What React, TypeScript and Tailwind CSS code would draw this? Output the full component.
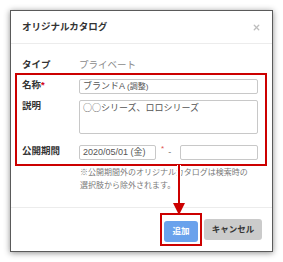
import { X } from "lucide-react";

const font = {
  fontFamily: '"Liberation Sans", "Noto Sans CJK JP", sans-serif',
};

const Label = ({ text, required }: { text: string; required?: boolean }) => (
  <div className="w-[57px] shrink-0 text-[9.5px] leading-[12px] font-bold text-[#333]">
    {text}
    {required && <span className="text-[#d0021b]">*</span>}
  </div>
);

export default function App() {
  return (
    <div
      className="relative w-[283px] h-[262px] bg-white pt-[10px] pl-[10px] overflow-hidden"
      style={font}
    >
      {/* dialog */}
      <div className="w-[263px] h-[242px] bg-white border border-[#5a5a5a] shadow-[0_1px_6px_rgba(0,0,0,0.45)] flex flex-col">
        {/* header */}
        <div className="h-[33px] shrink-0 flex items-center justify-between pl-[11px] pr-[11px] border-b border-[#ececec]">
          <p className="text-[9.5px] font-bold text-[#333]">オリジナルカタログ</p>
          <X size={9} strokeWidth={3.5} className="text-[#bdbdbd]" />
        </div>

        {/* body */}
        <div className="px-[11px] pt-[14px]">
          <div className="flex items-center h-[14px]">
            <Label text="タイプ" />
            <span className="text-[9.5px] text-[#8a8a8a]">プライベート</span>
          </div>

          <div className="mt-[1px] -ml-[7px] -mr-[6px] border-2 border-[#cc0000] pl-[5px] pr-[7px] pt-[4px] pb-[4px] flex flex-col">
            <div className="flex items-start">
              <Label text="名称" required />
              <div className="flex-1 h-[15px] border border-[#c8c8c8] rounded-[2px] px-[3px] flex items-center text-[9px] text-[#555]">
                ブランドA <span className="text-[8px] ml-[2px]">(調整)</span>
              </div>
            </div>

            <div className="flex items-start mt-[6px]">
              <Label text="説明" />
              <div className="flex-1 h-[34px] border border-[#c8c8c8] rounded-[2px] px-[3px] pt-[1px] text-[9px] leading-[12px] text-[#555] font-['Noto_Sans_CJK_JP',sans-serif]">
                ○○シリーズ、ロロシリーズ
              </div>
            </div>

            <div className="flex items-start mt-[11px]">
              <Label text="公開期間" />
              <div className="flex-1 flex items-start">
                <div className="w-[77px] h-[15px] border border-[#c8c8c8] rounded-[2px] px-[3px] flex items-center text-[9px] text-[#555]">
                  2020/05/01 (金)
                </div>
                <span className="ml-[5px] text-[8px] leading-[8px] text-[#e05050]">*</span>
                <span className="ml-[4px] mt-[3px] text-[9px] leading-[9px] text-[#777]">-</span>
                <div className="ml-auto w-[78px] h-[15px] border border-[#c8c8c8] rounded-[2px]" />
              </div>
            </div>
          </div>

          <p className="pl-[58px] pr-[8px] text-[8px] leading-[13px] text-[#7a7a7a]">
            ※公開期間外のオリジナルカタログは検索時の選択肢から除外されます。
          </p>
        </div>

        {/* footer */}
        <div className="mt-auto h-[44px] border-t border-[#ececec] flex items-center justify-end pr-[10px]">
          <div className="border-2 border-[#cc0000] p-[2px]">
            <button className="h-[21px] w-[34px] rounded-[3px] bg-[#6aa2ec] text-white text-[8.5px] font-bold">
              追加
            </button>
          </div>
          <button className="ml-[2px] h-[21px] w-[58px] rounded-[3px] bg-[#cbcbcb] text-[#333] text-[8.5px] font-bold">
            キャンセル
          </button>
        </div>
      </div>

      {/* annotation arrow */}
      <svg
        className="absolute left-[170px] top-[165px] pointer-events-none"
        width="20"
        height="52"
        viewBox="0 0 20 52"
      >
        <line x1="9" y1="0" x2="9" y2="40" stroke="white" strokeWidth="4" />
        <line x1="9" y1="0" x2="9" y2="40" stroke="#cc0000" strokeWidth="2" />
        <polygon points="3,38 15,38 9,50" fill="#cc0000" />
      </svg>
    </div>
  );
}
